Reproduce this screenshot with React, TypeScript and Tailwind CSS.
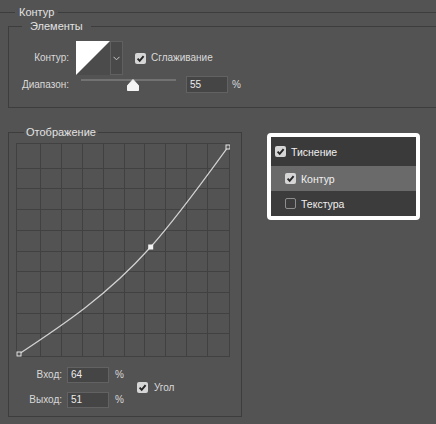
import React from 'react'

function CheckBox({ checked }: { checked: boolean }) {
  return checked ? (
    <span className="flex h-[11px] w-[11px] shrink-0 items-center justify-center rounded-[2px] bg-[#d6d6d6]">
      <svg width="9" height="9" viewBox="0 0 9 9">
        <path d="M1.6 4.6 L3.7 6.8 L7.6 2.1" fill="none" stroke="#262626" strokeWidth="1.9" />
      </svg>
    </span>
  ) : (
    <span className="h-[11px] w-[11px] shrink-0 rounded-[2px] border border-[#8e8e8e]" />
  )
}

function NumBox({ value, className = '' }: { value: string; className?: string }) {
  return (
    <div
      className={`flex w-[42px] items-center border border-[#626262] bg-[#454545] pl-[3px] text-[#ececec] ${className}`}
    >
      {value}
    </div>
  )
}

// сетка кривой: рамка 214x214, точки смещены внутрь на 3-4px
const vLines = Array.from({ length: 9 }, (_, i) => Math.round(3 + 20.9 * (i + 1)) + 0.5)
const hLines = Array.from({ length: 9 }, (_, i) => Math.round(4 + 20.7 * (i + 1)) + 0.5)

function CurveGrid() {
  return (
    <svg width="214" height="214" className="block">
      <rect x="0.5" y="0.5" width="213" height="213" fill="none" stroke="#414141" />
      {vLines.map(x => (
        <line key={`v${x}`} x1={x} y1="1" x2={x} y2="213" stroke="#414141" />
      ))}
      {hLines.map(y => (
        <line key={`h${y}`} x1="1" y1={y} x2="213" y2={y} stroke="#414141" />
      ))}
      <path
        d="M3 211 C46.9 182 90.8 153 134.7 104 C160.5 75.3 186.2 39.6 212 4"
        fill="none"
        stroke="#d2d2d2"
        strokeWidth="1.2"
      />
      <rect x="1" y="209" width="4" height="4" fill="#555" stroke="#e6e6e6" />
      <rect x="210" y="2" width="4" height="4" fill="#555" stroke="#e6e6e6" />
      <rect x="132.2" y="101.5" width="5" height="5" fill="#f2f2f2" />
    </svg>
  )
}

export default function App() {
  return (
    <div className="h-[424px] w-[436px] overflow-hidden bg-[#535353] font-['Liberation_Sans',Arial,sans-serif] text-[10px] leading-[14px] text-[#d9d9d9]">
      {/* Контур */}
      <div className="mt-[5px] flex h-[14px] items-center">
        <div className="h-px w-[15px] bg-[#3d3d3d]" />
        <span className="px-[4px] text-[11px] text-[#e2e2e2]">Контур</span>
        <div className="h-px flex-1 bg-[#3d3d3d]" />
      </div>

      {/* Элементы */}
      <fieldset className="ml-[8px] w-[450px] border border-[#3d3d3d]">
        <legend className="ml-[13px] px-[8px] text-[11px] leading-[14px] text-[#e2e2e2]">Элементы</legend>
        <div className="mt-[8px] flex h-[34px] items-center">
          <span className="w-[60px] text-right">Контур:</span>
          <div className="ml-[7px] flex">
            <svg width="34" height="34" className="block">
              <rect width="34" height="34" fill="#4b4b4b" />
              <polygon points="0,0 34,0 0,34" fill="#ffffff" />
            </svg>
            <div className="flex h-[34px] w-[13px] items-center justify-center border border-[#606060] bg-[#494949]">
              <svg width="7" height="5" viewBox="0 0 7 5">
                <path d="M0.5 0.8 L3.5 3.8 L6.5 0.8" fill="none" stroke="#c8c8c8" />
              </svg>
            </div>
          </div>
          <div className="ml-[12px] flex items-center gap-[5px]">
            <CheckBox checked />
            <span>Сглаживание</span>
          </div>
        </div>
        <div className="mt-[1px] mb-[14px] flex h-[17px] items-center">
          <span className="w-[60px] text-right">Диапазон:</span>
          <div className="relative ml-[12px] h-[17px] w-[95px]">
            <div className="mt-[3px] h-[2px] w-full bg-[#727272]" />
            <svg width="12" height="12" viewBox="0 0 12 12" className="absolute left-[46px] top-[3px]">
              <path d="M6 0.5 L11.5 6.5 L11.5 11.5 L0.5 11.5 L0.5 6.5 Z" fill="#f4f4f4" stroke="#f4f4f4" strokeLinejoin="round" />
            </svg>
          </div>
          <NumBox value="55" className="ml-[10px] h-[17px]" />
          <span className="ml-[4px]">%</span>
        </div>
      </fieldset>

      <div className="mt-[17px] flex items-start">
        {/* Отображение */}
        <fieldset className="ml-[8px] w-[234px] border border-[#3d3d3d]">
          <legend className="ml-[15px] px-[2px] text-[11px] leading-[14px] text-[#e2e2e2]">Отображение</legend>
          <div className="ml-[7px] mt-[4px]">
            <CurveGrid />
          </div>
          <div className="mt-[10px] mb-[8px] flex items-center">
            <div className="flex flex-col gap-[9px]">
              <div className="flex h-[16px] items-center">
                <span className="w-[53px] text-right">Вход:</span>
                <NumBox value="64" className="ml-[5px] h-[16px]" />
                <span className="ml-[6px]">%</span>
              </div>
              <div className="flex h-[16px] items-center">
                <span className="w-[53px] text-right">Выход:</span>
                <NumBox value="51" className="ml-[5px] h-[16px]" />
                <span className="ml-[6px]">%</span>
              </div>
            </div>
            <div className="ml-[13px] flex items-center gap-[6px]">
              <CheckBox checked />
              <span>Угол</span>
            </div>
          </div>
        </fieldset>

        {/* список стилей */}
        <div className="ml-[25px] mt-[8px] w-[153px] rounded-[4px] border-4 border-white text-[10.5px] text-[#f0f0f0]">
          <div className="flex h-[29px] items-center gap-[5px] bg-[#3a3a3a] pl-[4px]">
            <CheckBox checked />
            <span>Тиснение</span>
          </div>
          <div className="flex h-[25px] items-center gap-[5px] bg-[#6a6a6a] pl-[14px]">
            <CheckBox checked />
            <span>Контур</span>
          </div>
          <div className="flex h-[25px] items-center gap-[5px] bg-[#3c3c3c] pl-[14px]">
            <CheckBox checked={false} />
            <span>Текстура</span>
          </div>
        </div>
      </div>
    </div>
  )
}
